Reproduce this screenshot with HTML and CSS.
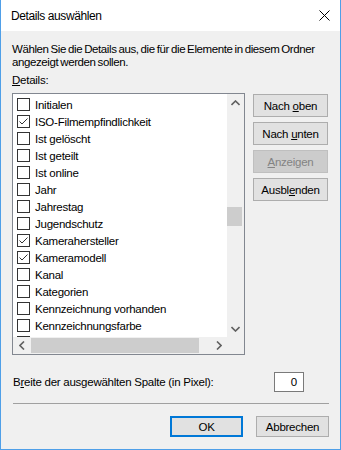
FILE: index.html
```html
<!doctype html>
<html>
<head>
<meta charset="utf-8">
<title>Details auswählen</title>
<link rel="stylesheet" href="styles.css">
</head>
<body>
<div class="window">
	<div class="titlebar">
		<span class="title">Details auswählen</span>
		<svg class="close" width="11" height="11" viewBox="0 0 11 11"><path d="M0.5 0.5L10.5 10.5M10.5 0.5L0.5 10.5" stroke="#000" stroke-width="1" fill="none"/></svg>
	</div>
	<div class="content">
		<p class="intro">Wählen Sie die Details aus, die für die Elemente in diesem Ordner angezeigt werden sollen.</p>
		<div class="label"><u>D</u>etails:</div>
		<div class="main">
			<div class="listbox">
				<div class="list_area">
					<ul class="items">
						<li><i class="chk"></i><span>Initialen</span></li>
						<li><i class="chk on"></i><span>ISO-Filmempfindlichkeit</span></li>
						<li><i class="chk"></i><span>Ist gelöscht</span></li>
						<li><i class="chk"></i><span>Ist geteilt</span></li>
						<li><i class="chk"></i><span>Ist online</span></li>
						<li><i class="chk"></i><span>Jahr</span></li>
						<li><i class="chk"></i><span>Jahrestag</span></li>
						<li><i class="chk"></i><span>Jugendschutz</span></li>
						<li><i class="chk on"></i><span>Kamerahersteller</span></li>
						<li><i class="chk on"></i><span>Kameramodell</span></li>
						<li><i class="chk"></i><span>Kanal</span></li>
						<li><i class="chk"></i><span>Kategorien</span></li>
						<li><i class="chk"></i><span>Kennzeichnung vorhanden</span></li>
						<li><i class="chk"></i><span>Kennzeichnungsfarbe</span></li>
						<li><i class="chk"></i></li>
					</ul>
					<div class="vscroll">
						<div class="sbtn"><svg width="9" height="6" viewBox="0 0 9 6"><path d="M0.5 5L4.5 1L8.5 5" stroke="#606060" stroke-width="1.6" fill="none"/></svg></div>
						<div class="vtrack"><div class="vthumb"></div></div>
						<div class="sbtn"><svg width="9" height="6" viewBox="0 0 9 6"><path d="M0.5 1L4.5 5L8.5 1" stroke="#606060" stroke-width="1.6" fill="none"/></svg></div>
					</div>
				</div>
				<div class="hscroll_row">
					<div class="hscroll">
						<div class="sbtn"><svg width="6" height="9" viewBox="0 0 6 9"><path d="M5 0.5L1 4.5L5 8.5" stroke="#606060" stroke-width="1.6" fill="none"/></svg></div>
						<div class="htrack"><div class="hthumb"></div></div>
						<div class="sbtn"><svg width="6" height="9" viewBox="0 0 6 9"><path d="M1 0.5L5 4.5L1 8.5" stroke="#606060" stroke-width="1.6" fill="none"/></svg></div>
					</div>
					<div class="corner"></div>
				</div>
			</div>
			<div class="side">
				<div class="btn"><span>Nach <u>o</u>ben</span></div>
				<div class="btn"><span>Nach <u>u</u>nten</span></div>
				<div class="btn disabled"><span><u>A</u>nzeigen</span></div>
				<div class="btn"><span>Ausbl<u>e</u>nden</span></div>
			</div>
		</div>
		<div class="width_row">
			<span>B<u>r</u>eite der ausgewählten Spalte (in Pixel):</span>
			<div class="num">0</div>
		</div>
		<div class="sep"></div>
		<div class="footer">
			<div class="btn ok"><span>OK</span></div>
			<div class="btn"><span>Abbrechen</span></div>
		</div>
	</div>
</div>
</body>
</html>
```
FILE: styles.css
```css
*{ margin:0; padding:0; list-style:none; box-sizing:border-box;}
html,body{ width:341px; height:450px; overflow:hidden; background:#fff;}
body{ font-family:"Liberation Sans", Arial, sans-serif; font-size:11.5px; letter-spacing:-0.25px; color:#000;}
u{ text-decoration:underline; text-underline-offset:1px;}

.window{ width:341px; height:450px; border:1px solid #4f9fe8; border-top:none; display:flex; flex-direction:column; background:#f0f0f0;}
.titlebar{ height:31px; background:#fff; display:flex; align-items:center; justify-content:space-between; padding:0 10px 0 10px;}
.title{ font-size:12px; letter-spacing:-0.4px; margin-top:1px;}
.close{ display:block;}

.content{ flex:1; padding:12px 11px 0 11px; display:flex; flex-direction:column;}
.intro{ line-height:13px; letter-spacing:-0.4px; word-spacing:-0.8px;}
.label{ line-height:13px; margin-top:5px;}

.main{ display:flex; gap:8px; margin-top:6px;}
.listbox{ width:233px; height:262px; border:1px solid #828790; background:#fff; display:flex; flex-direction:column;}
.list_area{ flex:1; display:flex; overflow:hidden;}
.items{ flex:1; padding-top:2px; overflow:hidden;}
.items li{ height:17px; display:flex; align-items:center; padding-left:4px; white-space:nowrap;}
.items span{ margin-left:5px;}
.chk{ width:13px; height:13px; border:1px solid #333; background:#fff; flex:none; display:block;}
.chk.on{ background:#fff url("data:image/svg+xml,%3Csvg xmlns='http://www.w3.org/2000/svg' width='11' height='11' viewBox='0 0 11 11'%3E%3Cpath d='M1.5 5.5L4 8L9.5 2.5' stroke='%23333' stroke-width='1' fill='none'/%3E%3C/svg%3E") no-repeat center;}

.vscroll{ width:17px; background:#f0f0f0; display:flex; flex-direction:column;}
.sbtn{ width:17px; height:17px; display:flex; align-items:center; justify-content:center; flex:none;}
.vtrack{ flex:1;}
.vthumb{ width:15px; height:19px; margin:96px 0 0 0; background:#cdcdcd;}
.hscroll_row{ height:17px; display:flex; background:#f0f0f0;}
.hscroll{ flex:1; display:flex;}
.htrack{ flex:1;}
.hthumb{ width:168px; height:15px; margin:1px 0 0 1px; background:#cdcdcd;}
.corner{ width:17px;}

.side{ display:flex; flex-direction:column; gap:5px; padding-top:1px;}
.btn{ width:75px; height:23px; border:1px solid #adadad; background:#e1e1e1; display:flex; align-items:center; justify-content:center; white-space:nowrap;}
.btn.disabled{ background:#cccccc; border-color:#bfbfbf; color:#838383;}

.width_row{ display:flex; align-items:center; justify-content:space-between; width:292px; margin-top:17px;}
.width_row span{ padding-left:1px;}
.num{ width:30px; height:20px; border:1px solid #7a7a7a; background:#fff; text-align:right; padding-right:6px; line-height:18px;}

.sep{ height:1px; background:#a0a0a0; margin-top:11px; width:316px; margin-left:1px;}
.footer{ display:flex; justify-content:flex-end; gap:13px; margin-top:12px;}
.footer .btn{ width:73px; height:21px;}
.btn.ok{ border:2px solid #0078d7;}
```
